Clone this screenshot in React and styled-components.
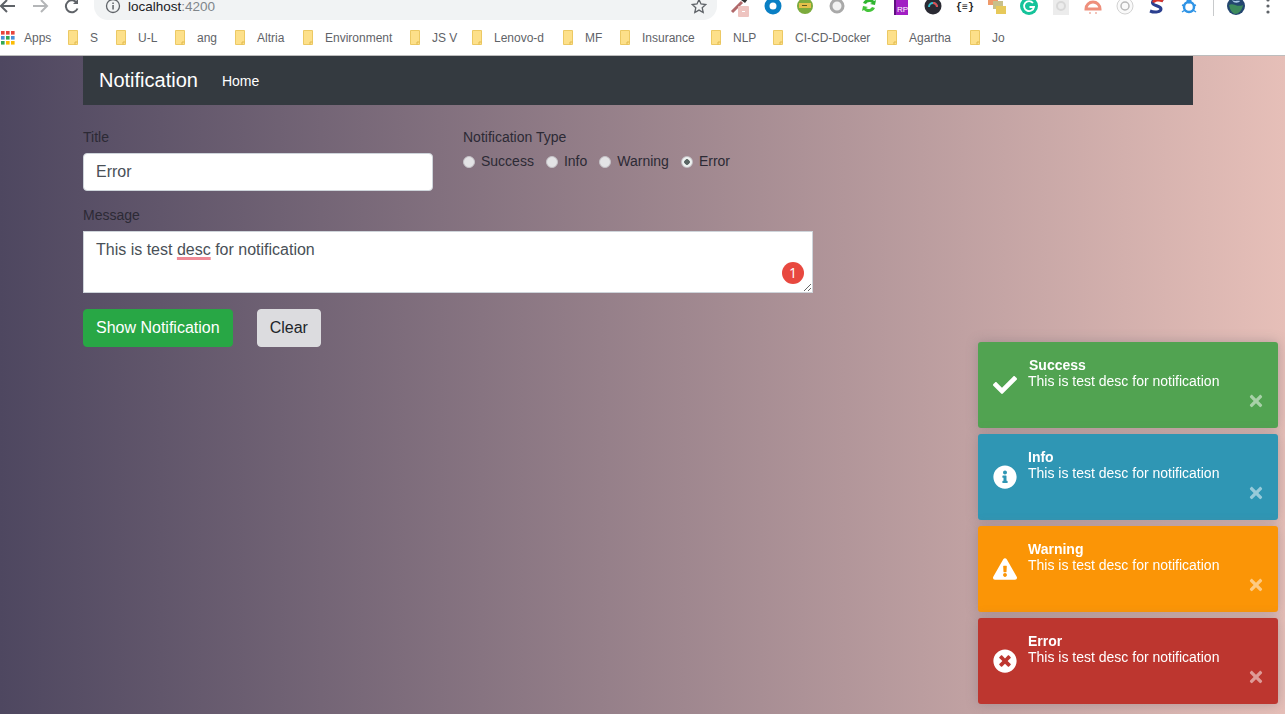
import React from 'react';
import styled, { createGlobalStyle } from 'styled-components';
import {
  FaCheck,
  FaInfoCircle,
  FaExclamationTriangle,
  FaTimesCircle,
  FaTimes,
} from 'react-icons/fa';

const GlobalStyle = createGlobalStyle`
  html, body {
    margin: 0;
    height: 100%;
    overflow: hidden;
    font-family: "Liberation Sans", Arial, sans-serif;
    color: #212529;
  }
  #root {
    height: 100%;
  }
  * {
    box-sizing: border-box;
  }
`;

const Page = styled.div`
  display: flex;
  flex-direction: column;
  height: 100%;
`;

/* browser chrome */
const Toolbar = styled.div`
  height: 20px;
  overflow: hidden;
  background: #fff;
  flex: none;
`;

const ToolbarInner = styled.div`
  display: flex;
  align-items: center;
  height: 40px;
  margin-top: -14px;
`;

const NavIcon = styled.svg`
  width: 32px;
  height: 18px;
  flex: none;
  margin-left: ${(p) => p.$ml || 0}px;
`;

const Omnibox = styled.div`
  display: flex;
  align-items: center;
  width: 623px;
  height: 28px;
  margin-left: 6px;
  padding: 0 10px 0 11px;
  background: #f1f3f4;
  border-radius: 0 0 14px 14px;
  flex: none;
`;

const Url = styled.span`
  margin-left: 7px;
  font-size: 13.5px;
  color: #202124;
  flex: 1;

  span {
    color: #80868b;
  }
`;

const Extensions = styled.div`
  display: flex;
  align-items: center;
  margin-left: 8px;
`;

const ExtSlot = styled.div`
  width: 32px;
  height: 20px;
  display: flex;
  align-items: center;
  justify-content: center;
  flex: none;
`;

const Separator = styled.div`
  width: 1px;
  height: 20px;
  margin: 0 6px 0 8px;
  background: #c8cacc;
`;

const Bookmarks = styled.div`
  display: flex;
  align-items: center;
  height: 36px;
  padding-left: 1px;
  flex: none;
  background: #fff;
  border-bottom: 1px solid #bdbdbd;
`;

const AppsLabel = styled.span`
  margin-left: 9px;
  width: 44px;
  font-size: 12px;
  color: #5f6368;
`;

const Bookmark = styled.div`
  display: flex;
  align-items: center;
  width: ${(p) => p.$w}px;
  font-size: 12px;
  color: #5f6368;
  flex: none;

  span {
    margin-left: 12px;
    white-space: nowrap;
  }
`;

/* page */
const Main = styled.main`
  flex: 1;
  background: linear-gradient(to right, #4e4760, #e6bfb8);
`;

const Container = styled.div`
  width: 1110px;
  margin-left: 83px;
`;

const Navbar = styled.nav`
  display: flex;
  align-items: center;
  height: 49px;
  padding-left: 16px;
  background: #343a40;
`;

const Brand = styled.a`
  font-size: 20px;
  color: #fff;
`;

const NavLink = styled.a`
  margin-left: 24px;
  font-size: 14px;
  color: #fff;
`;

const Form = styled.form`
  display: flex;
  flex-direction: column;
  padding-top: 22px;
`;

const TopRow = styled.div`
  display: flex;
  gap: 30px;
`;

const TitleField = styled.div`
  display: flex;
  flex-direction: column;
  width: 350px;
`;

const Label = styled.label`
  font-size: 14px;
  line-height: 21px;
  margin-bottom: ${(p) => p.$mb}px;
  color: #2c2a35;
`;

const TextInput = styled.input`
  height: 38px;
  padding: 0 12px;
  font: 16px "Liberation Sans", Arial, sans-serif;
  color: #495057;
  background: #fff;
  border: 1px solid #ced4da;
  border-radius: 4px;
  outline: none;
`;

const RadioRow = styled.div`
  display: flex;
  gap: 12px;
`;

const RadioLabel = styled.label`
  display: flex;
  align-items: center;
  gap: 6px;
  font-size: 14px;
  line-height: 21px;
  color: #2c2a35;
`;

const Radio = styled.input`
  appearance: none;
  width: 12px;
  height: 12px;
  margin: 0;
  border-radius: 50%;
  border: 1px solid #c4c1c6;
  background: ${(p) =>
    p.checked ? 'radial-gradient(circle, #5a6664 0 2.5px, #eef2f1 3px)' : '#e3e3e5'};
`;

const MessageField = styled.div`
  display: flex;
  flex-direction: column;
  width: 730px;
  margin-top: 14px;
`;

const MessageBox = styled.div`
  position: relative;
  height: 62px;
  padding: 6px 12px;
  font-size: 16px;
  line-height: 24px;
  color: #495057;
  background: #fff;
  border: 1px solid #ced4da;
  overflow: hidden;
  resize: both;
`;

const Misspelt = styled.span`
  text-decoration: underline #f08a96 3px;
  text-underline-offset: 2px;
  text-decoration-skip-ink: none;
`;

const GrammarlyBadge = styled.span`
  position: absolute;
  right: 8px;
  bottom: 8px;
  width: 22px;
  height: 22px;
  border-radius: 50%;
  background: #e8483f;
  color: #fff;
  font: 14px/22px "Open Sans", sans-serif;
  text-align: center;
`;

const Buttons = styled.div`
  display: flex;
  gap: 24px;
  margin-top: 16px;
`;

const Button = styled.button`
  height: 38px;
  padding: 0 12px;
  font: 16px "Liberation Sans", Arial, sans-serif;
  color: ${(p) => (p.$primary ? '#fff' : '#212529')};
  background: ${(p) => (p.$primary ? '#28a745' : '#dcdcdf')};
  border: 1px solid ${(p) => (p.$primary ? '#28a745' : '#dcdcdf')};
  border-radius: 4px;
`;

/* toasts */
const ToastStack = styled.div`
  position: fixed;
  right: 7px;
  bottom: 10px;
  display: flex;
  flex-direction: column;
  gap: 6px;
  width: 300px;
`;

const Toast = styled.div`
  position: relative;
  display: flex;
  height: 86px;
  color: #fff;
  background: ${(p) => p.$bg};
  border-radius: 3px;
  box-shadow: 0 0 12px rgba(120, 110, 120, 0.45);
`;

const ToastIcon = styled.div`
  display: flex;
  align-items: center;
  justify-content: center;
  width: 54px;
  flex: none;
  font-size: 24px;
`;

const ToastBody = styled.div`
  padding-top: 15px;
  margin-left: -4px;
  font-size: 14px;
  line-height: 16px;
`;

const ToastTitle = styled.div`
  font-weight: bold;
  margin-left: ${(p) => p.$nudge || 0}px;
`;

const ToastClose = styled.span`
  position: absolute;
  right: 13px;
  bottom: 18px;
  display: flex;
  font-size: 18px;
  opacity: 0.5;
`;

const bookmarks = [
  { name: 'S', w: 48 },
  { name: 'U-L', w: 59 },
  { name: 'ang', w: 60 },
  { name: 'Altria', w: 68 },
  { name: 'Environment', w: 107 },
  { name: 'JS V', w: 62 },
  { name: 'Lenovo-d', w: 91 },
  { name: 'MF', w: 57 },
  { name: 'Insurance', w: 91 },
  { name: 'NLP', w: 62 },
  { name: 'CI-CD-Docker', w: 114 },
  { name: 'Agartha', w: 83 },
  { name: 'Jo', w: 60 },
];

const toasts = [
  { title: 'Success', bg: '#51a351', icon: <FaCheck />, nudge: 1 },
  { title: 'Info', bg: '#2f96b4', icon: <FaInfoCircle /> },
  { title: 'Warning', bg: '#fb9506', icon: <FaExclamationTriangle /> },
  { title: 'Error', bg: '#bd362f', icon: <FaTimesCircle /> },
];

const types = ['Success', 'Info', 'Warning', 'Error'];

const FolderIcon = () => (
  <svg width="10" height="15" viewBox="0 0 10 15">
    <path d="M.5.5h9v14h-9z" fill="#fde08a" stroke="#ecc964" />
    <path d="M7 14.5v-2.5h2.5" fill="none" stroke="#e0b94e" />
  </svg>
);

const AppsIcon = () => {
  const colors = ['#e8453c', '#e8453c', '#e8453c', '#4a90d9', '#34a853', '#4a90d9', '#34a853', '#fbbc05', '#fbbc05'];
  return (
    <svg width="14" height="14" viewBox="0 0 14 14">
      {colors.map((c, i) => (
        <rect key={i} x={(i % 3) * 5} y={Math.floor(i / 3) * 5} width="3.6" height="3.6" fill={c} />
      ))}
    </svg>
  );
};

const extensions = [
  <svg width="22" height="22" viewBox="0 0 22 22" key="dropper">
    <path d="M2 17 12 7" stroke="#b0686a" strokeWidth="3" />
    <path d="M11 5l3-4 4 3-3 4z" fill="#333" />
    <rect x="8" y="11" width="11" height="11" rx="1" fill="#eec4c0" />
    <rect x="12" y="16" width="3" height="1" fill="#fff" />
  </svg>,
  <svg width="18" height="18" viewBox="0 0 18 18" key="ring">
    <circle cx="9" cy="9" r="6" fill="none" stroke="#0a7fc4" strokeWidth="5" />
  </svg>,
  <svg width="18" height="18" viewBox="0 0 18 18" key="green">
    <circle cx="9" cy="9" r="8" fill="#7cab3d" />
    <rect x="3" y="6" width="12" height="5" fill="#e3c04a" />
    <rect x="6" y="8" width="5" height="1" fill="#5a5a22" />
  </svg>,
  <svg width="18" height="18" viewBox="0 0 18 18" key="gray">
    <circle cx="9" cy="9" r="6" fill="#f2f2f2" stroke="#a9a9a9" strokeWidth="3" />
  </svg>,
  <svg width="18" height="18" viewBox="0 0 18 18" key="recycle">
    <path d="M3 6c2-5 9-5 11-2l2-1-1 5-5-1 2-1C10 4 7 5 6 7z" fill="#2fb52f" />
    <path d="M15 11c-2 5-9 5-11 2l-2 1 1-5 5 1-2 1c2 2 5 1 6-1z" fill="#45c43a" />
  </svg>,
  <svg width="16" height="18" viewBox="0 0 16 18" key="rp">
    <rect x="1" y="0" width="14" height="18" fill="#a21fc4" />
    <rect x="1" y="0" width="2" height="18" fill="#5f1280" />
    <text x="4" y="15" fontSize="8" fill="#fff" fontFamily="Liberation Sans">RP</text>
  </svg>,
  <svg width="18" height="18" viewBox="0 0 18 18" key="dial">
    <circle cx="9" cy="9" r="8.5" fill="#2a2a33" />
    <path d="M5 10a4 4 0 0 1 8 0" fill="none" stroke="#35c0d0" strokeWidth="2" />
    <path d="M9 6a4 4 0 0 1 4 4" fill="none" stroke="#e5484d" strokeWidth="2" />
  </svg>,
  <svg width="18" height="14" viewBox="0 0 18 14" key="json">
    <text x="0" y="11" fontSize="10" fontWeight="bold" fill="#222" fontFamily="Liberation Mono">{'{≡}'}</text>
  </svg>,
  <svg width="18" height="20" viewBox="0 0 18 20" key="stack">
    <rect x="0" y="0" width="10" height="9" fill="#ef9a6a" />
    <rect x="5" y="5" width="10" height="8" fill="#c9c08a" />
    <rect x="8" y="10" width="10" height="8" fill="#e7c95a" />
  </svg>,
  <svg width="18" height="18" viewBox="0 0 18 18" key="grammarly">
    <circle cx="9" cy="9" r="9" fill="#15c39a" />
    <path d="M13 6a5 5 0 1 0 1 4H9.5" fill="none" stroke="#fff" strokeWidth="1.8" />
  </svg>,
  <svg width="16" height="18" viewBox="0 0 16 18" key="pale">
    <rect width="16" height="18" fill="#ececec" />
    <circle cx="8" cy="9" r="4" fill="none" stroke="#d8d8d8" strokeWidth="2" />
  </svg>,
  <svg width="18" height="18" viewBox="0 0 18 18" key="salmon">
    <path d="M2 12a7 7 0 0 1 14 0z" fill="none" stroke="#ee8f7c" strokeWidth="3" />
    <rect x="2" y="11" width="14" height="2" fill="#ee8f7c" />
    <rect x="5" y="15" width="2" height="2" fill="#f3c4ba" />
    <rect x="11" y="15" width="2" height="2" fill="#f3c4ba" />
  </svg>,
  <svg width="18" height="18" viewBox="0 0 18 18" key="target">
    <circle cx="9" cy="9" r="8" fill="#fafafa" stroke="#d2d2d2" />
    <circle cx="9" cy="9" r="4" fill="none" stroke="#b9b9b9" strokeWidth="1.5" />
  </svg>,
  <svg width="16" height="16" viewBox="0 0 16 16" key="s">
    <path d="M14 3C10 0 4 1 3.500 4.500S12 7.500 12 11c0 3-6 4-11 2" fill="none" stroke="#2b3f8f" strokeWidth="3" />
    <path d="M14 3C10 1 5 2 4.500 4.500" fill="none" stroke="#d9342b" strokeWidth="3" />
  </svg>,
  <svg width="16" height="18" viewBox="0 0 16 18" key="bug">
    <circle cx="8" cy="10" r="5" fill="none" stroke="#2f94e6" strokeWidth="2.500" />
    <circle cx="8" cy="4" r="2.500" fill="#2f94e6" />
    <path d="M1 8l3 1M15 8l-3 1M1 15l3-2M15 15l-3-2" stroke="#2f94e6" strokeWidth="1.500" />
  </svg>,
];

const App = () => (
  <Page>
    <GlobalStyle />
    <Toolbar>
      <ToolbarInner>
        <NavIcon viewBox="0 0 32 18" $ml={-8}>
          <path d="M23 9H9M15 3 9 9l6 6" fill="none" stroke="#5f6368" strokeWidth="2" />
        </NavIcon>
        <NavIcon viewBox="0 0 32 18">
          <path d="M9 9h14M17 3l6 6-6 6" fill="none" stroke="#b4b6b8" strokeWidth="2" />
        </NavIcon>
        <NavIcon viewBox="0 0 32 18">
          <path d="M21.500 11.500a6 6 0 1 1-.6-5.500" fill="none" stroke="#5f6368" strokeWidth="2" />
          <path d="M22 2v5h-5z" fill="#5f6368" />
        </NavIcon>
        <Omnibox>
          <svg width="16" height="16" viewBox="0 0 16 16">
            <circle cx="8" cy="8" r="6.500" fill="none" stroke="#5f6368" strokeWidth="1.300" />
            <rect x="7.300" y="7" width="1.500" height="4.500" fill="#5f6368" />
            <rect x="7.300" y="4.500" width="1.500" height="1.500" fill="#5f6368" />
          </svg>
          <Url>
            localhost<span>:4200</span>
          </Url>
          <svg width="16" height="16" viewBox="0 0 16 16">
            <path
              d="M8 1.500l2 4.500 4.800.5-3.600 3.200 1 4.800L8 12.100l-4.200 2.400 1-4.800L1.200 6.500 6 6z"
              fill="none"
              stroke="#5f6368"
              strokeWidth="1.300"
            />
          </svg>
        </Omnibox>
        <Extensions>
          {extensions.map((icon) => (
            <ExtSlot key={icon.key}>{icon}</ExtSlot>
          ))}
          <Separator />
          <ExtSlot>
            <svg width="18" height="20" viewBox="0 0 18 20">
              <circle cx="9" cy="10" r="9" fill="#23466f" />
              <path d="M2 9c4-3 8 3 14 0-1 6-5 9-8 9-3-1-5-4-6-9z" fill="#3d8a5c" />
              <path d="M5 4c3 2 6 0 8 1-1 2-6 3-8-1z" fill="#a9c9e8" />
            </svg>
          </ExtSlot>
          <ExtSlot>
            <svg width="4" height="16" viewBox="0 0 4 16">
              <circle cx="2" cy="2" r="1.600" fill="#5f6368" />
              <circle cx="2" cy="8" r="1.600" fill="#5f6368" />
              <circle cx="2" cy="14" r="1.600" fill="#5f6368" />
            </svg>
          </ExtSlot>
        </Extensions>
      </ToolbarInner>
    </Toolbar>

    <Bookmarks>
      <AppsIcon />
      <AppsLabel>Apps</AppsLabel>
      {bookmarks.map((b) => (
        <Bookmark key={b.name} $w={b.w}>
          <FolderIcon />
          <span>{b.name}</span>
        </Bookmark>
      ))}
    </Bookmarks>

    <Main>
      <Container>
        <Navbar>
          <Brand>Notification</Brand>
          <NavLink>Home</NavLink>
        </Navbar>
        <Form>
          <TopRow>
            <TitleField>
              <Label $mb={5}>Title</Label>
              <TextInput defaultValue="Error" />
            </TitleField>
            <div>
              <Label as="div" $mb={3}>Notification Type</Label>
              <RadioRow>
                {types.map((t) => (
                  <RadioLabel key={t}>
                    <Radio type="radio" name="type" checked={t === 'Error'} readOnly />
                    {t}
                  </RadioLabel>
                ))}
              </RadioRow>
            </div>
          </TopRow>
          <MessageField>
            <Label $mb={5}>Message</Label>
            <MessageBox>
              This is test <Misspelt>desc</Misspelt> for notification
              <GrammarlyBadge>1</GrammarlyBadge>
            </MessageBox>
          </MessageField>
          <Buttons>
            <Button type="button" $primary>Show Notification</Button>
            <Button type="button">Clear</Button>
          </Buttons>
        </Form>
      </Container>
    </Main>

    <ToastStack>
      {toasts.map((t) => (
        <Toast key={t.title} $bg={t.bg}>
          <ToastIcon>{t.icon}</ToastIcon>
          <ToastBody>
            <ToastTitle $nudge={t.nudge}>{t.title}</ToastTitle>
            This is test desc for notification
          </ToastBody>
          <ToastClose><FaTimes /></ToastClose>
        </Toast>
      ))}
    </ToastStack>
  </Page>
);

export default App;
